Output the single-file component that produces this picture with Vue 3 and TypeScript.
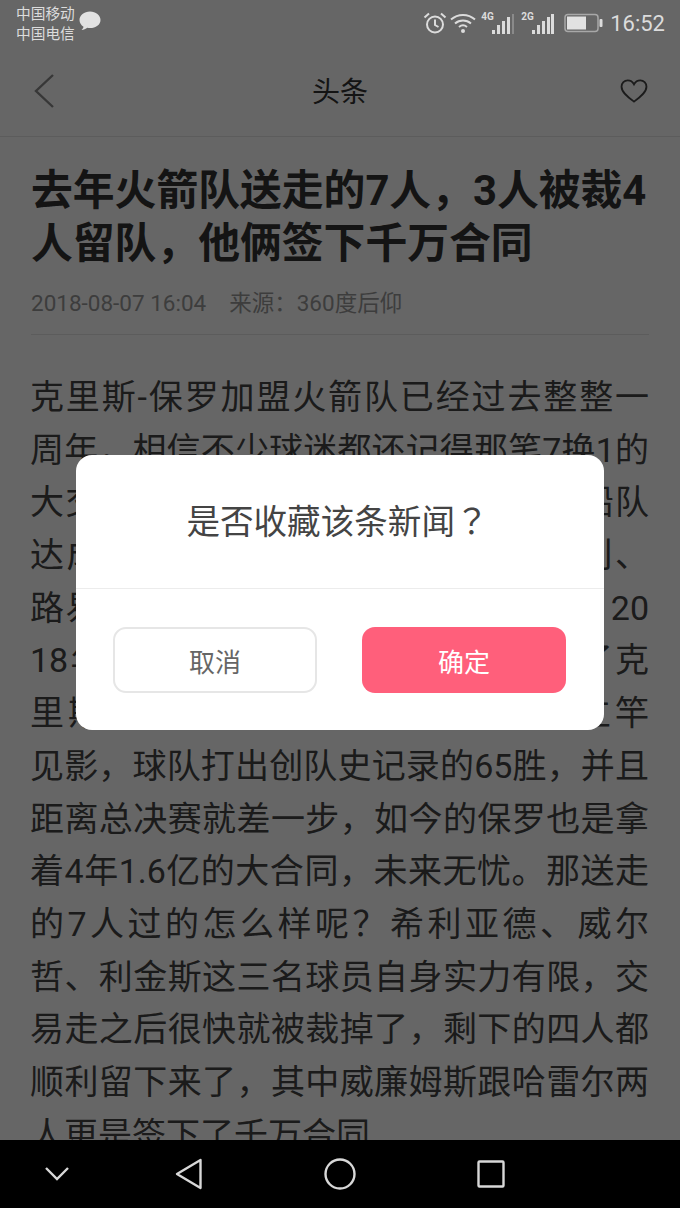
<script setup lang="ts">
// 正文按原图逐行排版，每行两端对齐
const titleLines: string[] = ['去年火箭队送走的7人，3人被裁4', '人留队，他俩签下千万合同']
const bodyLines: string[] = [
  '克里斯-保罗加盟火箭队已经过去整整一',
  '周年，相信不少球迷都还记得那笔7换1的',
  '大交易，当时火箭队送走7人才与快船队',
  '达成协议，其中包括哈雷尔、贝弗利、',
  '路易斯-威廉姆斯等球员。从结果看，20',
  '18年的这笔交易很成功，火箭得到了克',
  '里斯-保罗之后，实力大增，效果立竿',
  '见影，球队打出创队史记录的65胜，并且',
  '距离总决赛就差一步，如今的保罗也是拿',
  '着4年1.6亿的大合同，未来无忧。那送走',
  '的7人过的怎么样呢？希利亚德、威尔',
  '哲、利金斯这三名球员自身实力有限，交',
  '易走之后很快就被裁掉了，剩下的四人都',
  '顺利留下来了，其中威廉姆斯跟哈雷尔两',
  '人更是签下了千万合同',
]
</script>

<template>
  <div class="phone">
    <div class="status">
      <div class="carriers">
        <span>中国移动</span>
        <span>中国电信</span>
      </div>
      <svg class="bubble" width="24" height="22" viewBox="0 0 24 22">
        <path d="M12 1.500C6.200 1.500 1.500 5.200 1.500 10c0 2.800 1.600 5.200 4 6.700-.2 1.200-1 2.400-2 3.300 2.200-.1 4.300-1 5.800-2.200.9.200 1.800.3 2.700.3 5.800 0 10.500-3.400 10.500-8.100S17.800 1.500 12 1.500z" fill="#e2e2e2" />
      </svg>
      <div class="status-right">
        <svg class="alarm" width="24" height="24" viewBox="0 0 24 24" fill="none" stroke="#dcdcdc" stroke-width="2">
          <circle cx="12" cy="13.500" r="8" />
          <path d="M12 8.500v5.500l3.500 2M1.500 6.500 6 2.500M22.500 6.500 18 2.500" />
        </svg>
        <svg class="wifi" width="26" height="22" viewBox="0 0 26 22" fill="none" stroke="#dcdcdc" stroke-width="2">
          <path d="M1 7.500c7-6 17-6 24 0M5 11.500c4.600-4 11.400-4 16 0M9 15c2.400-2 5.600-2 8 0" />
          <circle cx="13" cy="19" r="2" fill="#dcdcdc" stroke="none" />
        </svg>
        <div class="signal">
          <span class="net">4G</span>
          <svg width="22" height="22" viewBox="0 0 22 22" fill="#dcdcdc">
            <rect x="0" y="17" width="3" height="4" />
            <rect x="5" y="12" width="3" height="9" />
            <rect x="10" y="8" width="3" height="13" />
            <rect x="15" y="4" width="3" height="17" />
            <rect x="20" y="1" width="2" height="20" fill="#8a8a8a" />
          </svg>
        </div>
        <div class="signal signal-b">
          <span class="net">2G</span>
          <svg width="22" height="22" viewBox="0 0 22 22" fill="#dcdcdc">
            <rect x="0" y="17" width="3" height="4" />
            <rect x="5" y="12" width="3" height="9" />
            <rect x="10" y="8" width="3" height="13" />
            <rect x="15" y="4" width="3" height="17" />
            <rect x="19" y="1" width="3" height="20" />
          </svg>
        </div>
        <svg class="battery" width="39" height="20" viewBox="0 0 39 20">
          <rect x="1" y="1.500" width="33" height="17" rx="3" fill="none" stroke="#a8a8a8" stroke-width="1.500" />
          <rect x="3" y="3.500" width="19" height="13" fill="#e2e2e2" />
          <rect x="35.500" y="6" width="3" height="8" rx="1" fill="#dcdcdc" />
        </svg>
        <span class="clock">16:52</span>
      </div>
    </div>

    <div class="screen">
      <header class="nav">
        <svg class="back" width="22" height="36" viewBox="0 0 22 36" fill="none" stroke="#8a8a8a" stroke-width="2.400">
          <path d="M20 2 3 18l17 16" />
        </svg>
        <h2 class="nav-title">头条</h2>
        <svg width="28" height="24" viewBox="0 0 30 26" fill="none" stroke="#444" stroke-width="2">
          <path d="M15 24.500C9 20 1.500 14.500 1.500 8.300 1.500 4.400 4.500 1.500 8.200 1.500c2.800 0 5.300 1.500 6.800 4.200 1.500-2.700 4-4.200 6.800-4.200 3.700 0 6.700 2.900 6.700 6.800 0 6.200-7.500 11.700-13.500 16.200z" />
        </svg>
      </header>

      <article class="article">
        <h1 class="title">
          <span v-for="line in titleLines" :key="line" class="title-line">{{ line }}</span>
        </h1>
        <div class="meta">
          <span>2018-08-07 16:04</span>
          <span>来源：360度后仰</span>
        </div>
        <div class="body">
          <p v-for="line in bodyLines" :key="line" class="line">{{ line }}</p>
        </div>
      </article>

      <div class="mask">
        <div class="dialog">
          <div class="dialog-text">是否收藏该条新闻<span class="q">？</span></div>
          <div class="dialog-actions">
            <button class="btn btn-cancel">取消</button>
            <button class="btn btn-ok">确定</button>
          </div>
        </div>
      </div>
    </div>

    <nav class="navbar">
      <svg width="26" height="18" viewBox="0 0 26 18" fill="none" stroke="#d8d8d8" stroke-width="2.400">
        <path d="M2 3l11 11L24 3" />
      </svg>
      <svg class="nav-back" width="28" height="32" viewBox="0 0 28 32" fill="none" stroke="#d8d8d8" stroke-width="2.400" stroke-linejoin="round">
        <path d="M25.500 2 2 16l23.500 14z" />
      </svg>
      <svg class="nav-home" width="32" height="32" viewBox="0 0 32 32" fill="none" stroke="#d8d8d8" stroke-width="2.400">
        <circle cx="16" cy="16" r="14.500" />
      </svg>
      <svg class="nav-recent" width="28" height="28" viewBox="0 0 28 28" fill="none" stroke="#d8d8d8" stroke-width="2.400" stroke-linejoin="round">
        <rect x="1.500" y="1.500" width="25" height="25" rx="1" />
      </svg>
    </nav>
  </div>
</template>

<style>
html,
body {
  margin: 0;
  background: #666;
}
</style>

<style scoped>
.phone {
  width: 680px;
  height: 1208px;
  display: flex;
  flex-direction: column;
  overflow: hidden;
  font-family: "Roboto", "Noto Sans CJK SC", sans-serif;
}

.status {
  height: 46px;
  flex: none;
  background: #666;
  display: flex;
  align-items: center;
  padding: 0 15px 0 16px;
  color: #dcdcdc;
}

.carriers {
  display: flex;
  flex-direction: column;
  font-size: 14.700px;
  line-height: 20px;
  padding-top: 1px;
}

.bubble {
  margin: -5px 0 0 3px;
}

.status-right {
  margin-left: auto;
  display: flex;
  align-items: center;
}

.wifi {
  margin-left: 3px;
}

.signal {
  display: flex;
  align-items: flex-end;
  height: 24px;
  position: relative;
  padding-left: 11px;
  margin-left: 5px;
}

.signal-b {
  margin-left: 7px;
}

.net {
  position: absolute;
  left: 0;
  top: 0;
  font-size: 10px;
  font-weight: 700;
  line-height: 12px;
}

.battery {
  margin-left: 10px;
}

.clock {
  font-size: 22px;
  margin-left: 7px;
}

.screen {
  flex: 1;
  min-height: 0;
  position: relative;
  background: #fff;
  overflow: hidden;
}

.nav {
  height: 91px;
  box-sizing: border-box;
  border-bottom: 1px solid #e6e6e6;
  display: flex;
  align-items: center;
  justify-content: space-between;
  padding: 0 32px 0 33px;
}

.back {
  margin-right: 5px;
}

.nav-title {
  margin: 0;
  padding-bottom: 2px;
  font-size: 28px;
  font-weight: 400;
  color: #333;
}

.article {
  padding: 0 31px;
}

.title {
  margin: 27px 0 0;
  font-size: 41.800px;
  line-height: 53px;
  font-weight: 700;
  color: #333;
}

.title-line {
  display: block;
  white-space: nowrap;
}

.meta {
  margin-top: 18px;
  padding-bottom: 16px;
  border-bottom: 1px solid #e6e6e6;
  display: flex;
  gap: 23px;
  font-size: 22.500px;
  line-height: 30px;
  color: #999;
}

.body {
  margin: 36px 0 0 -1px;
  font-size: 34px;
  line-height: 52.700px;
  color: #444;
}

.line {
  margin: 0;
  height: 52.700px;
  text-align: justify;
  text-align-last: justify;
}

.line:last-child {
  text-align-last: left;
}

.mask {
  position: absolute;
  inset: 0;
  padding-bottom: 1px;
  background: rgba(0, 0, 0, 0.6);
  display: flex;
  align-items: center;
  justify-content: center;
}

.dialog {
  width: 528px;
  height: 275px;
  background: #fff;
  border-radius: 16px;
  display: flex;
  flex-direction: column;
}

.dialog-text {
  height: 134px;
  box-sizing: border-box;
  padding: 0 5px 4px 0;
  flex: none;
  border-bottom: 1px solid #ececec;
  display: flex;
  align-items: center;
  justify-content: center;
  font-size: 33.600px;
  color: #444;
}

/* 全角问号居中 */
.q {
  font-family: "Noto Sans CJK TC", sans-serif;
}

.dialog-actions {
  flex: 1;
  display: flex;
  justify-content: space-between;
  align-items: center;
  padding: 1px 38px 0 37px;
}

.btn {
  width: 204px;
  height: 66px;
  box-sizing: border-box;
  border-radius: 13px;
  font-family: inherit;
  font-size: 26px;
  padding: 0;
}

.btn-cancel {
  background: #fff;
  border: 2px solid #e6e6e6;
  color: #666;
}

.btn-ok {
  background: #ff5f7b;
  border: none;
  color: #fff;
}

.navbar {
  height: 68px;
  flex: none;
  background: #000;
  box-sizing: border-box;
  display: flex;
  align-items: center;
  padding-left: 44px;
}

.nav-back {
  margin-left: 105px;
}

.nav-home {
  margin-left: 121px;
}

.nav-recent {
  margin-left: 121px;
}
</style>
